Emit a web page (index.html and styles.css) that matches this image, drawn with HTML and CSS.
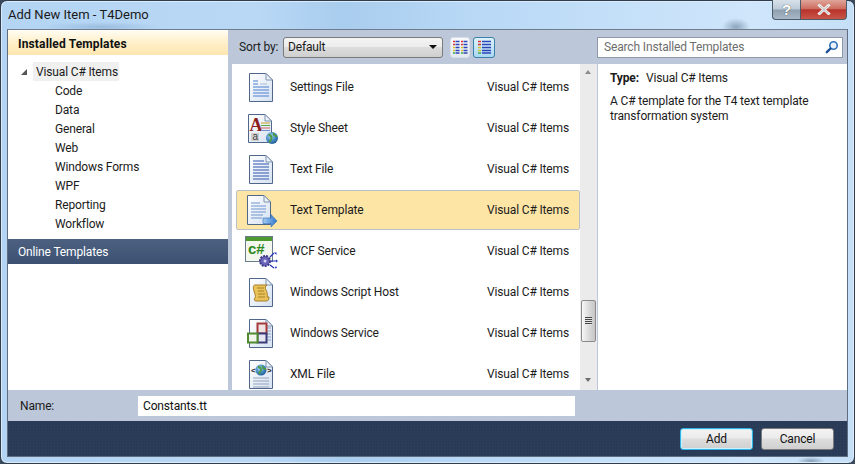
FILE: index.html
```html
<!DOCTYPE html>
<html lang="en">
<head>
<meta charset="utf-8">
<title>Add New Item - T4Demo</title>
<link rel="stylesheet" href="styles.css">
</head>
<body>
<svg class="defs" width="0" height="0" aria-hidden="true">
  <defs>
    <linearGradient id="paper" x1="0" y1="0" x2="1" y2="1"><stop offset="0" stop-color="#ffffff"/><stop offset="1" stop-color="#d5e1f2"/></linearGradient>
    <radialGradient id="globe" cx=".4" cy=".35" r=".7"><stop offset="0" stop-color="#a8d8f0"/><stop offset=".6" stop-color="#3f86c0"/><stop offset="1" stop-color="#1d5a92"/></radialGradient>
    <linearGradient id="arrow" x1="0" y1="0" x2="1" y2="0"><stop offset="0" stop-color="#a9cdf2"/><stop offset="1" stop-color="#2f76cc"/></linearGradient>
    <symbol id="doc" viewBox="0 0 36 36">
      <path d="M6.500 4.500H23L29.500 11V32.500H6.500Z" fill="url(#paper)" stroke="#51678a"/>
      <path d="M23 4.500V11H29.500Z" fill="#eef3fa" stroke="#7f93b0"/>
    </symbol>
  </defs>
</svg>
<div class="window">
  <header class="titlebar">
    <h1 class="title">Add New Item - T4Demo</h1>
    <div class="capbtns">
      <div class="capbtn help">?</div>
      <div class="capbtn close">
        <svg width="14" height="11" viewBox="0 0 14 11"><path d="M2.500 1.500L11.500 9.500M11.500 1.500L2.500 9.500" stroke="#f2f2f2" stroke-width="3" stroke-linecap="square"/><path d="M2.500 1.500L11.500 9.500M11.500 1.500L2.500 9.500" stroke="#6b6b6b" stroke-width="1" opacity=".45"/></svg>
      </div>
    </div>
  </header>
  <div class="client">
    <div class="panes">
      <aside class="left">
        <div class="lefthead">Installed Templates</div>
        <div class="tree">
          <div class="rootrow"><span class="twist"></span><span class="rootlabel">Visual C# Items</span></div>
          <div class="leaf">Code</div>
          <div class="leaf">Data</div>
          <div class="leaf">General</div>
          <div class="leaf">Web</div>
          <div class="leaf">Windows Forms</div>
          <div class="leaf">WPF</div>
          <div class="leaf">Reporting</div>
          <div class="leaf">Workflow</div>
        </div>
        <div class="online">Online Templates</div>
      </aside>
      <section class="middle">
        <div class="toolbar">
          <span class="sortlabel">Sort by:</span>
          <div class="combo"><span>Default</span><span class="caret"></span></div>
          <div class="viewbtn">
            <svg width="15" height="14" viewBox="0 0 15 14"><path d="M0 1.500h2M0 4.500h2" stroke="#d33" stroke-width="1.400"/><path d="M0 7.500h2M0 10.500h2" stroke="#d9c12a" stroke-width="1.400"/><path d="M0 13h2" stroke="#3aa84a" stroke-width="1.400"/><path d="M2.500 1.500h4M2.500 4.500h4M2.500 7.500h4M2.500 10.500h4M2.500 13h4" stroke="#2c46b8" stroke-width="1.400"/><path d="M8 1.500h2M8 4.500h2" stroke="#d33" stroke-width="1.400"/><path d="M8 7.500h2M8 10.500h2" stroke="#d9c12a" stroke-width="1.400"/><path d="M8 13h2" stroke="#3aa84a" stroke-width="1.400"/><path d="M10.500 1.500h4M10.500 4.500h4M10.500 7.500h4M10.500 10.500h4M10.500 13h4" stroke="#2c46b8" stroke-width="1.400"/></svg>
          </div>
          <div class="viewbtn on">
            <svg width="15" height="14" viewBox="0 0 15 14"><path d="M1 1.500h3M1 4.500h3" stroke="#d33" stroke-width="1.400"/><path d="M1 7.500h3M1 10.500h3" stroke="#d9c12a" stroke-width="1.400"/><path d="M1 13h3" stroke="#3aa84a" stroke-width="1.400"/><path d="M5 1.500h9M5 4.500h9M5 7.500h9M5 10.500h9M5 13h9" stroke="#2c46b8" stroke-width="1.400"/></svg>
          </div>
        </div>
        <div class="listwrap">
          <div class="list">
            <div class="item">
              <svg class="icon" viewBox="0 0 36 36"><use href="#doc" width="36" height="36"/><path d="M10 12h5M10 15h5M10 18h16M10 21h16M10 24h16M10 27h16" stroke="#4a7fd0" stroke-width="1"/><path d="M17 15h7" stroke="#a9bddb"/></svg>
              <span class="name">Settings File</span><span class="kind">Visual C# Items</span>
            </div>
            <div class="item">
              <svg class="icon" viewBox="0 0 36 36"><path d="M5.500 4.500H22L28.500 11V32.500H5.500Z" fill="url(#paper)" stroke="#51678a"/><path d="M22 4.500V11H28.500Z" fill="#eef3fa" stroke="#7f93b0"/><text class="glyph-a" x="6.500" y="21">A</text><path d="M18 13h9" stroke="#c9a227"/><path d="M18 15.500h9" stroke="#5aa84a"/><path d="M18 18h9" stroke="#d56060"/><path d="M18 20.500h9" stroke="#6f8fd0"/><rect x="8" y="23" width="8" height="8" fill="#cfcfcf"/><text class="glyph-b" x="9.500" y="30">a</text><circle cx="29" cy="28" r="6" fill="url(#globe)"/><path d="M25.500 25c2 0 3 1 3 3s-2 3-2 4.500M31 23c-1 2 1 3 3 3" stroke="#4f9a45" stroke-width="2" fill="none"/></svg>
              <span class="name">Style Sheet</span><span class="kind">Visual C# Items</span>
            </div>
            <div class="item">
              <svg class="icon" viewBox="0 0 36 36"><use href="#doc" width="36" height="36"/><path d="M10 10h11M10 13h16M10 16h16M10 19h16M10 22h16M10 25h16M10 28h16" stroke="#2f55ac" stroke-width="1"/></svg>
              <span class="name">Text File</span><span class="kind">Visual C# Items</span>
            </div>
            <div class="item selected">
              <svg class="icon" viewBox="0 0 36 36"><path d="M4.500 3.500H21L27.500 10V32.500H4.500Z" fill="url(#paper)" stroke="#51678a"/><path d="M21 3.500V10H27.500Z" fill="#eef3fa" stroke="#7f93b0"/><path d="M8 11h9M8 14h15M8 17h15M8 20h15M8 23h12M8 26h11" stroke="#6f93cc"/><path d="M20 26H28V22.500L34 29L28 35V31.500H20Z" fill="url(#arrow)" stroke="#2a68b8" stroke-width=".6"/></svg>
              <span class="name">Text Template</span><span class="kind">Visual C# Items</span>
            </div>
            <div class="item">
              <svg class="icon" viewBox="0 0 36 36"><rect x="2.500" y="3.500" width="27" height="25" fill="#f4f7ee" stroke="#6a7c8c"/><rect x="3" y="4" width="26" height="4" fill="#4f9a2e"/><text class="glyph-c" x="5" y="21">c#</text><circle cx="22" cy="28" r="5" fill="#6a63b8" stroke="#3d3a8a" stroke-dasharray="2 1" stroke-width="2"/><circle cx="22" cy="28" r="1.500" fill="#d6d4f0"/><path d="M27 24l4-4M28 28h5M27 32l4 3" stroke="#2430b8" stroke-width="1.200"/><path d="M31 19.500h2.500v2.500zM33 26.500l2 1.500-2 1.500zM31.500 35.500l2.500-.5-1-2z" fill="#2430b8"/></svg>
              <span class="name">WCF Service</span><span class="kind">Visual C# Items</span>
            </div>
            <div class="item">
              <svg class="icon" viewBox="0 0 36 36"><use href="#doc" width="36" height="36"/><path d="M12 11h12c-2 1-2 3-1 5s2 5 1 7h2c0 3-1 4-3 4H13c-2 0-2-2-1-3 1-2 0-4-1-7s-1-6 1-6z" fill="#e9c25a" stroke="#a87f23"/><path d="M14 14h7M15 17h6M15 20h7M15 23h7" stroke="#a87f23"/></svg>
              <span class="name">Windows Script Host</span><span class="kind">Visual C# Items</span>
            </div>
            <div class="item">
              <svg class="icon" viewBox="0 0 36 36"><use href="#doc" width="36" height="36"/><path d="M24 13h4M24 16h4M24 19h4M24 22h4M24 25h4" stroke="#8ba0c4"/><rect x="14.500" y="8.500" width="9" height="10" fill="#f0e3e3" stroke="#a33a3a" stroke-width="2"/><rect x="14.500" y="18.500" width="9" height="9" fill="#e6e6f2" stroke="#3b3b7a" stroke-width="2"/><rect x="5" y="18.500" width="9.500" height="9" fill="#f1f5ec" stroke="#4f8a2e" stroke-width="2"/></svg>
              <span class="name">Windows Service</span><span class="kind">Visual C# Items</span>
            </div>
            <div class="item">
              <svg class="icon" viewBox="0 0 36 36"><use href="#doc" width="36" height="36"/><circle cx="18" cy="14" r="5.500" fill="url(#globe)"/><path d="M15 11c2 0 3 1 3 3s-2 2-2 4M20 10c-1 2 1 3 3 3" stroke="#4f9a45" stroke-width="1.800" fill="none"/><text class="glyph-x" x="8" y="17">&lt;</text><text class="glyph-x" x="24" y="17">&gt;</text><path d="M10 22h16M10 25h16M10 28h16M10 31h16" stroke="#93a3ba"/></svg>
              <span class="name">XML File</span><span class="kind">Visual C# Items</span>
            </div>
          </div>
          <div class="scrollbar">
            <span class="arrow up"></span>
            <div class="thumb"><span class="grip"></span></div>
            <span class="arrow down"></span>
          </div>
        </div>
      </section>
      <section class="right">
        <div class="searchbar">
          <div class="search"><span>Search Installed Templates</span>
            <svg width="14" height="14" viewBox="0 0 14 14"><circle cx="8.500" cy="5.500" r="3.700" fill="#eaf3fb" stroke="#2f6fb8" stroke-width="1.600"/><path d="M5.500 8.500L1.800 12.200" stroke="#1d4f96" stroke-width="2.400" stroke-linecap="round"/></svg>
          </div>
        </div>
        <div class="details">
          <p class="typeline"><b>Type:</b><span>Visual C# Items</span></p>
          <p class="desc">A C# template for the T4 text template transformation system</p>
        </div>
      </section>
    </div>
    <div class="namebar">
      <label class="namelabel" for="nm">Name:</label>
      <input class="nameinput" id="nm" value="Constants.tt">
    </div>
    <div class="footer">
      <button class="btn default">Add</button>
      <button class="btn">Cancel</button>
    </div>
  </div>
</div>
</body>
</html>
```
FILE: styles.css
```css
* { box-sizing: border-box; }
html, body { margin: 0; padding: 0; height: 100%; background: #3a4a5c; overflow: hidden; }
body { font: 12px/16px Roboto, "Noto Sans", sans-serif; letter-spacing: -0.15px; color: #1b1b1b; }
.defs { position: absolute; }
.window {
  width: 855px; height: 464px; display: flex; flex-direction: column;
  padding: 0 6px 6px 6px; border: 1px solid #2f3d4c; border-radius: 7px;
  background:
    radial-gradient(14px 9px at 735px 26px, rgba(90,115,140,.55), transparent),
    radial-gradient(60px 5px at 100px 26px, rgba(130,165,200,.5), transparent),
    radial-gradient(14px 4px at 810px 460px, rgba(90,115,140,.6), transparent),
    linear-gradient(90deg, #b3d4f3 0%, #b9d8f6 30%, #a9cdee 40%, #b8d8f6 55%, #cfe6fb 88%, #c4dff7 100%);
  box-shadow: inset 0 0 0 1px #dcebfa;
}
.titlebar { height: 28px; flex: none; display: flex; justify-content: space-between; align-items: flex-start; }
.title { margin: 6px 0 0 1px; font-size: 13px; line-height: 16px; font-weight: 400; letter-spacing: 0; color: #1a1a1a; }
.capbtns { display: flex; margin-right: 1px; height: 20px; margin-top: -1px; }
.capbtn { height: 20px; display: flex; align-items: center; justify-content: center; border: 1px solid #4d5a68; border-top: 0; }
.help { width: 28px; border-radius: 0 0 0 4px; border-right: 0; color: #fff; font: 700 15px/18px "Liberation Sans", sans-serif; text-shadow: 0 0 1px #333;
  background: linear-gradient(#d7e1ea 0%, #bcc9d6 48%, #8f9fae 52%, #a9b8c6 100%); }
.close { width: 47px; border-radius: 0 0 4px 0; background: linear-gradient(#e0a59a 0%, #cc6e60 45%, #b8322a 52%, #c8564a 100%); }
.client { flex: 1; display: flex; flex-direction: column; border: 1px solid #5d6c7e; border-top-color: #6f7c8c; min-height: 0; }
.panes { flex: 1; display: flex; min-height: 0; background: #bcc8d9; }
.left { width: 220px; flex: none; background: #fff; display: flex; flex-direction: column; }
.lefthead { height: 25px; flex: none; padding: 6px 0 0 10px; font-weight: 700; letter-spacing: 0.15px; color: #111; background: linear-gradient(#fffdf6 0%, #fff3d4 35%, #fde5ae 100%); }
.tree { padding: 7px 0 0 0; height: 184px; flex: none; }
.rootrow { display: flex; align-items: center; height: 19px; padding-left: 13px; }
.twist { width: 0; height: 0; border-style: solid; border-width: 0 0 6px 6px; border-color: transparent transparent #555 transparent; margin-right: 6px; }
.rootlabel { display: block; width: 86px; height: 19px; line-height: 21px; padding-left: 3px; background: #f0f0f0; white-space: nowrap; }
.leaf { height: 19px; line-height: 21px; padding-left: 47px; }
.online { height: 25px; flex: none; line-height: 27px; padding-left: 10px; color: #fff; background: linear-gradient(#4d6080, #3c5172); }
.middle { width: 366px; flex: none; margin-left: 4px; display: flex; flex-direction: column; min-height: 0; }
.toolbar { height: 34px; flex: none; display: flex; align-items: center; padding-left: 7px; }
.sortlabel { width: 44px; flex: none; }
.combo { width: 160px; height: 21px; display: flex; align-items: center; justify-content: space-between; padding: 0 5px 0 4px; border: 1px solid #7a7a7a; border-radius: 3px; background: linear-gradient(#f4f4f4 0%, #ececec 45%, #dcdcdc 50%, #cfcfcf 100%); }
.caret { width: 0; height: 0; border-style: solid; border-width: 4px 4px 0 4px; border-color: #111 transparent transparent transparent; }
.viewbtn { width: 20px; height: 21px; margin-left: 7px; display: flex; align-items: center; justify-content: center; border: 1px solid #d6dee8; border-radius: 3px; background: linear-gradient(#f7f9fb, #e3e9f0); flex: none; }
.viewbtn.on { width: 22px; margin-left: 3px; border-color: #3c7fa8; background: linear-gradient(#dff2fc, #a9d8f2); }
.listwrap { flex: 1; display: flex; min-height: 0; background: #fff; }
.list { width: 348px; flex: none; padding: 3px 0 0 4px; overflow: hidden; display: flex; flex-direction: column; gap: 1px; }
.item { height: 40px; flex: none; display: flex; align-items: center; padding-left: 7px; }
.item.selected { background: #fde5a6; border: 1px solid #b9c0c8; border-radius: 2px; padding-left: 6px; }
.icon { width: 36px; height: 36px; flex: none; }
.name { width: 197px; flex: none; margin-left: 11px; }
.kind { white-space: nowrap; }
.glyph-a { font: 700 18px "Liberation Serif", serif; fill: #8c1d1d; }
.glyph-b { font: 10px "Liberation Sans", sans-serif; fill: #444; }
.glyph-c { font: 700 15px "Liberation Sans", sans-serif; fill: #2e8a1e; }
.glyph-x { font: 700 8px "Liberation Sans", sans-serif; fill: #222; }
.scrollbar { width: 18px; flex: none; background: #ebebeb; border-right: 1px solid #bcc8d9; position: relative; }
.arrow { position: absolute; left: 5px; width: 0; height: 0; border-style: solid; border-color: transparent; }
.arrow.up { top: 6px; border-width: 0 3.500px 4px 3.500px; border-bottom-color: #8b8b8b; }
.arrow.down { bottom: 8px; border-width: 4px 3.500px 0 3.500px; border-top-color: #6e6e6e; }
.thumb { position: absolute; top: 236px; left: 1px; width: 15px; height: 42px; border: 1px solid #8a8a8a; border-radius: 2px; background: linear-gradient(90deg, #f7f7f7, #dcdcdc 50%, #c6c6c6); display: flex; align-items: center; justify-content: center; }
.grip { width: 7px; height: 8px; background: repeating-linear-gradient(#444 0 1px, #e6e6e6 1px 2px); }
.right { flex: 1; display: flex; flex-direction: column; min-width: 0; }
.searchbar { height: 34px; flex: none; display: flex; align-items: center; }
.search { width: 246px; height: 21px; margin-left: -1px; display: flex; align-items: center; justify-content: space-between; padding: 0 3px 0 6px; background: #fff; border: 1px solid #8d99a8; color: #6d6d6d; }
.details { flex: 1; background: #fff; padding: 6px 12px; }
.details p { margin: 0; }
.typeline { display: flex; gap: 7px; }
.desc { margin-top: 8px !important; line-height: 15px; }
.namebar { height: 31px; flex: none; display: flex; align-items: center; padding-left: 12px; background: #bcc8d9; }
.namelabel { width: 118px; flex: none; padding-top: 1px; }
.nameinput { width: 437px; height: 20px; padding: 0 5px; border: 0; background: #fff; font: inherit; letter-spacing: inherit; color: #111; outline: 0; }
.footer { height: 35px; flex: none; display: flex; justify-content: flex-end; align-items: center; gap: 8px; padding: 0 13px 0 0;
  background-color: #2a3b57; background-image: radial-gradient(#2f415e 0.6px, transparent 0.7px); background-size: 3px 3px; }
.btn { width: 73px; height: 22px; padding: 0; font: inherit; letter-spacing: inherit; color: #111; border: 1px solid #7b7b7b; border-radius: 3px; background: linear-gradient(#f3f3f3 0%, #ebebeb 45%, #dddddd 50%, #cfcfcf 100%); }
.btn.default { border-color: #2fb4e6; box-shadow: inset 0 0 0 1px #cdeefb; }
```
